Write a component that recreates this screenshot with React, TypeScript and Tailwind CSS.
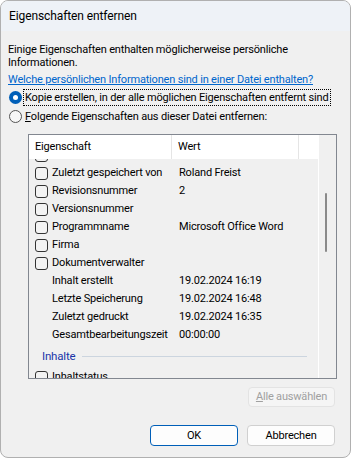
import React from "react";

const font = { fontFamily: 'Roboto, "Noto Sans", sans-serif' };

function Checkbox() {
  return <span className="inline-block w-[13px] h-[13px] rounded-[3px] border border-[#333333] bg-[#f3f3f3] shrink-0" />;
}

type Row = { label: string; value?: string; cb: boolean };

const rows: Row[] = [
  { label: "", cb: true },
  { label: "Zuletzt gespeichert von", value: "Roland Freist", cb: true },
  { label: "Revisionsnummer", value: "2", cb: true },
  { label: "Versionsnummer", cb: true },
  { label: "Programmname", value: "Microsoft Office Word", cb: true },
  { label: "Firma", cb: true },
  { label: "Dokumentverwalter", cb: true },
  { label: "Inhalt erstellt", value: "19.02.2024 16:19", cb: false },
  { label: "Letzte Speicherung", value: "19.02.2024 16:48", cb: false },
  { label: "Zuletzt gedruckt", value: "19.02.2024 16:35", cb: false },
  { label: "Gesamtbearbeitungszeit", value: "00:00:00", cb: false },
];

export default function App() {
  return (
    <div className="w-[353px] h-[459px] bg-white text-[11px] tracking-[-0.18px] text-black leading-[14px]" style={font}>
      <div className="w-[351px] h-[458px] border border-[#b0b0b0] rounded-[8px] overflow-hidden flex flex-col bg-[#f0f0f0]">
        <div className="h-[30px] shrink-0 bg-[#eef2f7] flex items-center pl-[8px] text-[12px] tracking-[-0.1px]">Eigenschaften entfernen</div>
        <div className="flex flex-col pl-[7px] pt-[12px]">
          <p className="leading-[13px]">Einige Eigenschaften enthalten möglicherweise persönliche Informationen.</p>
          <a className="mt-[4px] text-[#0066cc] underline leading-[14px] cursor-pointer whitespace-nowrap">Welche persönlichen Informationen sind in einer Datei enthalten?</a>
          <div className="mt-[2px] h-[17px] flex items-center">
            <span className="w-[13px] h-[13px] rounded-full bg-[#005fb8] flex items-center justify-center ml-[1px] shrink-0">
              <span className="w-[5px] h-[5px] rounded-full bg-white" />
            </span>
            <span className="ml-[1px] border border-dotted border-black h-[17px] flex items-center px-[1px] whitespace-nowrap">Kopie erstellen, in der alle möglichen Eigenschaften entfernt sind</span>
          </div>
          <div className="mt-[2px] h-[17px] flex items-center">
            <span className="w-[13px] h-[13px] rounded-full border border-[#555555] bg-[#f7f7f7] ml-[1px] shrink-0" />
            <span className="ml-[3px] whitespace-nowrap"><span className="underline">F</span>olgende Eigenschaften aus dieser Datei entfernen:</span>
          </div>
          <div className="ml-[20px] mt-[9px] w-[309px] h-[245px] border border-[#828790] flex overflow-hidden">
            <div className="w-[290px] flex flex-col border-r border-white">
              <div className="h-[24px] bg-white flex items-center shrink-0">
                <div className="w-[143px] h-full flex items-center pl-[6px] border-r border-[#e5e5e5]">Eigenschaft</div>
                <div className="w-[127px] h-full flex items-center pl-[6px] border-r border-[#e5e5e5]">Wert</div>
              </div>
              <div className="flex-1 overflow-hidden">
                <div className="mt-[-13px]">
                  {rows.map((r, i) => (
                    <div key={i} className="h-[18px] flex items-center pl-[6px]">
                      {r.cb ? <Checkbox /> : <span className="w-[13px] shrink-0" />}
                      <span className="ml-[4px] w-[127px] shrink-0 whitespace-nowrap">{r.label}</span>
                      <span className="whitespace-nowrap">{r.value ?? ""}</span>
                    </div>
                  ))}
                  <div className="h-[24px] flex items-center pl-[13px] pr-[11px]">
                    <span className="text-[#1a35a8] text-[11.5px]">Inhalte</span>
                    <span className="flex-1 h-px bg-[#ccd5df] ml-[7px]" />
                  </div>
                  <div className="h-[18px] flex items-center pl-[6px]">
                    <Checkbox />
                    <span className="ml-[4px]">Inhaltstatus</span>
                  </div>
                </div>
              </div>
            </div>
            <div className="flex-1 relative">
              <div className="absolute left-[6px] top-[58px] w-[2px] h-[59px] rounded-full bg-[#8a8a8a]" />
            </div>
          </div>
          <div className="flex justify-end pr-[15px] mt-[8px]">
            <button className="w-[87px] h-[20px] rounded-[4px] border border-[#e3e3e3] bg-[#f5f5f5] text-[#a0a0a0] flex items-center justify-center">
              <span><span className="underline">A</span>lle auswählen</span>
            </button>
          </div>
          <div className="flex justify-end pr-[15px] mt-[18px] gap-[9px]">
            <button className="w-[88px] h-[21px] rounded-[4px] border border-[#005fb8] bg-[#fdfdfd] flex items-center justify-center">OK</button>
            <button className="w-[88px] h-[21px] rounded-[4px] border border-[#d0d0d0] bg-[#fdfdfd] flex items-center justify-center">Abbrechen</button>
          </div>
        </div>
      </div>
    </div>
  );
}
